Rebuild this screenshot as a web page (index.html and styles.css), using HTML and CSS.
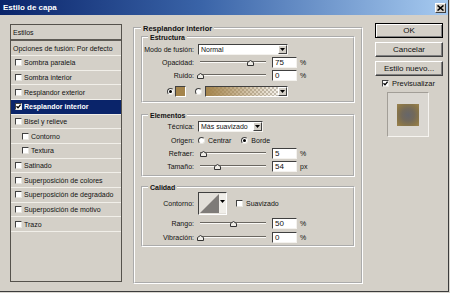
FILE: index.html
```html
<!DOCTYPE html>
<html>
<head>
<meta charset="utf-8">
<link rel="stylesheet" href="styles.css">
</head>
<body>
<div class="dialog">
  <div class="titlebar">
    <span class="title">Estilo de capa</span>
    <span class="close"><svg width="7" height="6" viewBox="0 0 7 6"><path d="M0.5 0.5 L6.5 5.5 M6.5 0.5 L0.5 5.5" stroke="#000" stroke-width="1.6"/></svg></span>
  </div>
  <div class="content">
    <div class="styles">
      <div class="st-head">Estilos</div>
      <div class="st-row st-opts">Opciones de fusión: Por defecto</div>
      <div class="st-row"><span class="cb"></span>Sombra paralela</div>
      <div class="st-row"><span class="cb"></span>Sombra interior</div>
      <div class="st-row"><span class="cb"></span>Resplandor exterior</div>
      <div class="st-row sel"><span class="cb"><svg width="5" height="5" viewBox="0 0 5 5"><path d="M0.5 2.2 L2 3.8 L4.6 0.6" stroke="#000" stroke-width="1.3" fill="none"/></svg></span>Resplandor interior</div>
      <div class="st-row"><span class="cb"></span>Bisel y relieve</div>
      <div class="st-row sub"><span class="cb"></span>Contorno</div>
      <div class="st-row sub"><span class="cb"></span>Textura</div>
      <div class="st-row"><span class="cb"></span>Satinado</div>
      <div class="st-row"><span class="cb"></span>Superposición de colores</div>
      <div class="st-row"><span class="cb"></span>Superposición de degradado</div>
      <div class="st-row"><span class="cb"></span>Superposición de motivo</div>
      <div class="st-row"><span class="cb"></span>Trazo</div>
    </div>

    <fieldset class="group main">
      <legend class="main-legend">Resplandor interior</legend>

      <fieldset class="group inner estructura">
        <legend>Estructura</legend>
        <div class="row"><span class="lbl">Modo de fusión:</span><span class="select sel-mode">Normal<span class="dd"><svg width="5" height="3" viewBox="0 0 5 3"><path d="M0 0 H5 L2.5 3 Z" fill="#000"/></svg></span></span></div>
        <div class="row"><span class="lbl">Opacidad:</span><span class="slider"><span class="track"></span><svg class="thumb" style="left:47px" width="7" height="6" viewBox="0 0 7 6"><path d="M0.5 5.5 V2.5 L3.5 0.5 L6.5 2.5 V5.5 Z" fill="#eeece6" stroke="#333" stroke-width="1"/></svg></span><span class="num">75</span><span class="unit">%</span></div>
        <div class="row"><span class="lbl">Ruido:</span><span class="slider"><span class="track"></span><svg class="thumb" style="left:-3px" width="7" height="6" viewBox="0 0 7 6"><path d="M0.5 5.5 V2.5 L3.5 0.5 L6.5 2.5 V5.5 Z" fill="#eeece6" stroke="#333" stroke-width="1"/></svg></span><span class="num">0</span><span class="unit">%</span></div>
        <div class="row color-row">
          <span class="radio on"></span>
          <span class="swatch"></span>
          <span class="radio"></span>
          <span class="gradient"><span class="dd"><svg width="5" height="3" viewBox="0 0 5 3"><path d="M0 0 H5 L2.5 3 Z" fill="#000"/></svg></span></span>
        </div>
      </fieldset>

      <fieldset class="group inner elementos">
        <legend>Elementos</legend>
        <div class="row"><span class="lbl">Técnica:</span><span class="select sel-tec">Más suavizado<span class="dd"><svg width="5" height="3" viewBox="0 0 5 3"><path d="M0 0 H5 L2.5 3 Z" fill="#000"/></svg></span></span></div>
        <div class="row origen"><span class="lbl">Origen:</span><span class="radio"></span><span class="rtext">Centrar</span><span class="radio r2 on"></span><span class="rtext">Borde</span></div>
        <div class="row"><span class="lbl">Refraer:</span><span class="slider"><span class="track"></span><svg class="thumb" style="left:0px" width="7" height="6" viewBox="0 0 7 6"><path d="M0.5 5.5 V2.5 L3.5 0.5 L6.5 2.5 V5.5 Z" fill="#eeece6" stroke="#333" stroke-width="1"/></svg></span><span class="num">5</span><span class="unit">%</span></div>
        <div class="row"><span class="lbl">Tamaño:</span><span class="slider"><span class="track"></span><svg class="thumb" style="left:14px" width="7" height="6" viewBox="0 0 7 6"><path d="M0.5 5.5 V2.5 L3.5 0.5 L6.5 2.5 V5.5 Z" fill="#eeece6" stroke="#333" stroke-width="1"/></svg></span><span class="num">54</span><span class="unit">px</span></div>
      </fieldset>

      <fieldset class="group inner calidad">
        <legend>Calidad</legend>
        <div class="row contour-row"><span class="lbl">Contorno:</span>
          <span class="contour"><svg width="19" height="19" viewBox="0 0 19 19"><path d="M0 19 L19 0 V19 Z" fill="#7e7b78"/></svg><span class="cdd"><svg width="5" height="3" viewBox="0 0 5 3"><path d="M0 0 H5 L2.5 3 Z" fill="#000"/></svg></span></span>
          <span class="cb plain"></span><span class="rtext">Suavizado</span>
        </div>
        <div class="row rango"><span class="lbl">Rango:</span><span class="slider"><span class="track"></span><svg class="thumb" style="left:30px" width="7" height="6" viewBox="0 0 7 6"><path d="M0.5 5.5 V2.5 L3.5 0.5 L6.5 2.5 V5.5 Z" fill="#eeece6" stroke="#333" stroke-width="1"/></svg></span><span class="num">50</span><span class="unit">%</span></div>
        <div class="row vib"><span class="lbl">Vibración:</span><span class="slider"><span class="track"></span><svg class="thumb" style="left:-3px" width="7" height="6" viewBox="0 0 7 6"><path d="M0.5 5.5 V2.5 L3.5 0.5 L6.5 2.5 V5.5 Z" fill="#eeece6" stroke="#333" stroke-width="1"/></svg></span><span class="num">0</span><span class="unit">%</span></div>
      </fieldset>
    </fieldset>

    <div class="side">
      <div class="btn default">OK</div>
      <div class="btn">Cancelar</div>
      <div class="btn btn-last">Estilo nuevo...</div>
      <div class="preview-check"><span class="cb"><svg width="5" height="5" viewBox="0 0 5 5"><path d="M0.5 2.2 L2 3.8 L4.6 0.6" stroke="#000" stroke-width="1.3" fill="none"/></svg></span>Previsualizar</div>
      <div class="preview"><div class="preview-swatch"></div></div>
    </div>
  </div>
</div>
</body>
</html>
```

FILE: styles.css
```css
* { box-sizing: border-box; }
html, body { margin: 0; padding: 0; }
body {
  background: #d9d6d0;
  font-family: "Liberation Sans", Arial, sans-serif;
  font-size: 7px;
  color: #111;
  width: 450px;
  height: 293px;
  overflow: hidden;
}
.dialog {
  width: 449px;
  height: 292px;
  background: #d4d0c8;
  border-right: 1px solid #3c3c3c;
  border-bottom: 1px solid #3c3c3c;
  display: flex;
  flex-direction: column;
}
.titlebar {
  height: 15px;
  background: linear-gradient(to right, #0a246a, #3a64a8 45%, #a6caf0);
  display: flex;
  align-items: center;
  justify-content: space-between;
  padding: 0 2px 0 3px;
}
.title {
  color: #fff;
  font-weight: bold;
  font-size: 8px;
}
.close {
  width: 11px;
  height: 10px;
  background: #d4d0c8;
  border: 1px solid;
  border-color: #fff #404040 #404040 #fff;
  display: flex;
  align-items: center;
  justify-content: center;
}
.content {
  display: flex;
  align-items: flex-start;
  padding-left: 10px;
}

/* Styles list */
.styles {
  margin-top: 9px;
  width: 112px;
  height: 258px;
  border: 1px solid #55524c;
}
.st-head {
  height: 16px;
  padding-left: 2px;
  display: flex;
  align-items: center;
  border-bottom: 2px solid #5e5b55;
}
.st-row {
  height: 14.67px;
  display: flex;
  align-items: center;
  padding-left: 4px;
  border-bottom: 1px solid #f1efe9;
}
.st-opts {
  height: 15px;
  padding-left: 2px;
}
.st-row.sub { padding-left: 11px; }
.st-row.sel {
  background: #0a246a;
  color: #fff;
  font-weight: bold;
}
.cb {
  width: 7px;
  height: 7px;
  background: #fff;
  border: 1px solid;
  border-color: #404040 #e8e6e0 #e8e6e0 #404040;
  margin-right: 2px;
  display: inline-flex;
  align-items: center;
  justify-content: center;
  flex: none;
}

/* group boxes */
fieldset.group {
  margin: 0;
  padding: 0;
  min-width: 0;
  border: 2px groove #ffffff;
}
fieldset.group legend {
  padding: 0 2px;
  font-weight: bold;
  font-size: 7px;
  line-height: 9px;
  margin-left: 5px;
}
fieldset.group.main {
  margin: 8.5px 0 0 11px;
  width: 230px;
  height: 260px;
  padding: 0 5px 0 6px;
}
fieldset.main > legend.main-legend {
  font-size: 7.5px;
  margin-left: 0;
}
fieldset.group.inner { width: 214px; }
fieldset.group.estructura { padding: 1px 0 3px; }
fieldset.group.elementos { margin-top: 8px; padding: 0 0 2px; }
fieldset.group.calidad { margin-top: 6px; padding: 0 0 1px; }

.row {
  height: 13px;
  display: flex;
  align-items: center;
}
.lbl {
  width: 51px;
  text-align: right;
  margin-right: 4px;
  flex: none;
}
.select {
  height: 11px;
  background: #fff;
  border: 1px solid;
  border-color: #404040 #f4f2ee #f4f2ee #404040;
  display: flex;
  align-items: center;
  justify-content: space-between;
  padding-left: 2px;
}
.sel-mode { width: 90px; }
.sel-tec { width: 65px; }
.dd {
  width: 9px;
  height: 9px;
  background: #d4d0c8;
  border: 1px solid;
  border-color: #fff #404040 #404040 #fff;
  display: flex;
  align-items: center;
  justify-content: center;
}
.slider {
  position: relative;
  width: 66px;
  height: 11px;
  margin-left: 2px;
  display: flex;
  align-items: center;
}
.track {
  width: 100%;
  height: 2px;
  border-top: 1px solid #6a6761;
  border-bottom: 1px solid #fbfaf7;
}
.thumb {
  position: absolute;
  top: 3px;
}
.num {
  width: 25px;
  height: 11px;
  margin-left: 6px;
  background: #fff;
  border: 1px solid;
  border-color: #404040 #f4f2ee #f4f2ee #404040;
  padding-left: 2px;
  font-size: 8px;
  line-height: 9px;
}
.unit { margin-left: 3px; }

.color-row {
  margin-top: 3px;
  padding-left: 24px;
}
.radio {
  width: 7px;
  height: 7px;
  border-radius: 50%;
  background: #fff;
  border: 1px solid;
  border-color: #404040 #e8e6e0 #e8e6e0 #404040;
  flex: none;
  display: inline-flex;
  align-items: center;
  justify-content: center;
}
.radio.on::after {
  content: "";
  width: 3px;
  height: 3px;
  border-radius: 50%;
  background: #000;
}
.swatch {
  width: 11px;
  height: 11px;
  margin-left: 1px;
  background: #a4844c;
  border: 1px solid;
  border-color: #404040 #fff #fff #404040;
}
.color-row .radio:nth-child(3) { margin-left: 9px; }
.gradient {
  width: 83px;
  height: 11px;
  margin-left: 3px;
  border: 1px solid;
  border-color: #404040 #fff #fff #404040;
  background:
    linear-gradient(to right, #a4844c, rgba(164,132,76,0.45) 55%, rgba(164,132,76,0)),
    repeating-conic-gradient(#c9c6c0 0 25%, #fff 0 50%) 0 0 / 4px 4px;
  display: flex;
  justify-content: flex-end;
}
.origen { margin-top: 1px; }
.rtext { margin-left: 3px; }
.origen .r2 { margin-left: 10px; }

.contour-row {
  height: 23px;
  margin-top: 0.5px;
}
.contour {
  width: 29px;
  height: 23px;
  border: 1px solid;
  border-color: #404040 #fff #fff #404040;
  background: #e2dfd9;
  display: flex;
  align-items: stretch;
  padding: 1px 0 1px 1px;
}
.contour svg { flex: none; }
.cdd {
  flex: 1;
  display: flex;
  justify-content: center;
  padding-top: 6px;
  background: #f0eee9;
}
.cb.plain { margin-left: 9px; margin-right: 0; }
.rango { margin-top: 1.5px; }
.vib { margin-top: 1px; }

/* side */
.side {
  margin-left: 12px;
  margin-top: 8px;
  width: 68px;
  display: flex;
  flex-direction: column;
}
.btn {
  height: 15px;
  border: 1px solid;
  border-color: #fff #404040 #404040 #fff;
  box-shadow: inset -1px -1px 0 #808080;
  display: flex;
  align-items: center;
  justify-content: center;
  font-size: 8px;
  margin-bottom: 4px;
}
.btn.btn-last { margin-bottom: 1.5px; }
.btn.default {
  border: 1px solid #000;
  box-shadow: inset 1px 1px 0 #fff, inset -1px -1px 0 #808080;
}
.preview-check {
  display: flex;
  align-items: center;
  font-size: 7.5px;
  padding-left: 7px;
  height: 11px;
}
.preview-check .cb { margin-right: 3px; }
.preview {
  margin-top: 3.5px;
  margin-left: 12px;
  width: 42px;
  height: 45px;
  border: 1px solid;
  border-color: #a29e97 #f6f4f0 #f6f4f0 #a29e97;
  background: #dad7d1;
  padding: 11px 0 0 9px;
}
.preview-swatch {
  width: 22px;
  height: 22px;
  background: radial-gradient(circle, #66666a 0%, #72695a 40%, #8a7648 75%, #9c8450 100%);
}
```
